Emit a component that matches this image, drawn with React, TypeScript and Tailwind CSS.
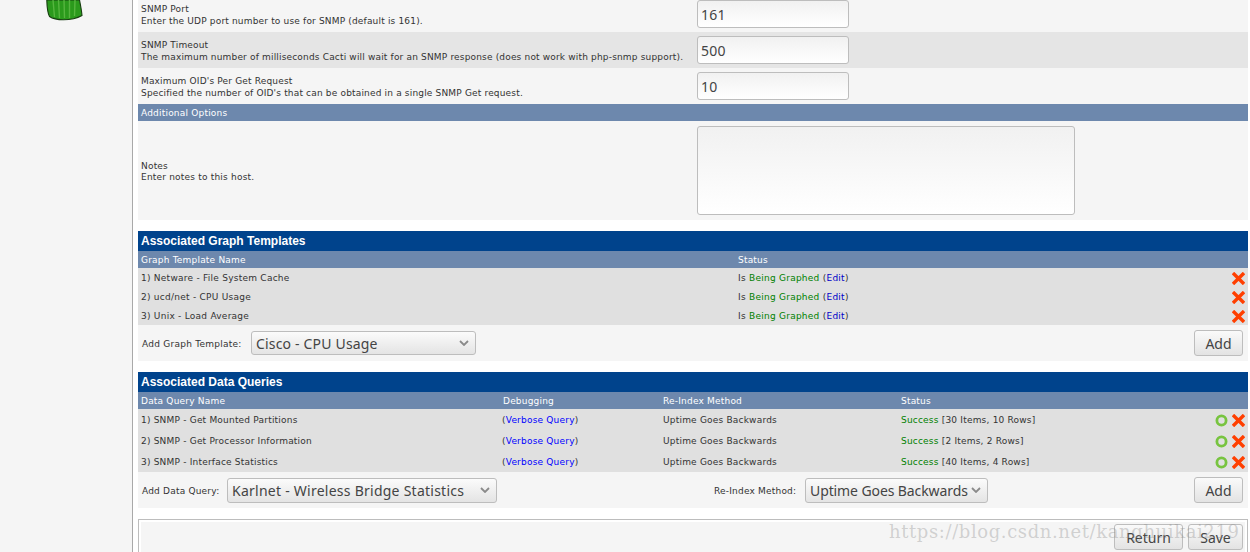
const ui = "font-['DejaVu_Sans',sans-serif]";
const ctl = "font-['Noto_Sans',sans-serif]";

function RedX() {
  return (
    <svg width="13" height="13" viewBox="0 0 13 13" className="shrink-0">
      <path d="M2.2 2.2 L10.8 10.8 M10.8 2.2 L2.2 10.8" stroke="#ff3f00" strokeWidth="3.4" strokeLinecap="square" />
    </svg>
  );
}

function GreenRing() {
  return (
    <svg width="13" height="13" viewBox="0 0 13 13" className="shrink-0">
      <circle cx="6.5" cy="6.5" r="4.6" fill="none" stroke="#78c440" strokeWidth="2.8" />
    </svg>
  );
}

function Chevron() {
  return (
    <svg width="10" height="6" viewBox="0 0 10 6" className="shrink-0">
      <path d="M1 1 L5 5 L9 1" fill="none" stroke="#8a8a8a" strokeWidth="1.8" />
    </svg>
  );
}

function FakeSelect({ value, className }: { value: string; className: string }) {
  return (
    <div
      className={`flex items-center justify-between pl-[4px] pr-[6px] border border-[#bdbdbd] rounded-[3px] bg-gradient-to-b from-[#fbfbfb] to-[#e4e4e4] text-[14px] whitespace-nowrap text-[#444] shrink-0 ${ctl} ${className}`}
    >
      <span>{value}</span>
      <Chevron />
    </div>
  );
}

function Btn({ label, className }: { label: string; className: string }) {
  return (
    <button className={`h-[26px] border border-[#bdbdbd] rounded-[3px] bg-gradient-to-b from-[#fafafa] to-[#e3e3e3] text-[14px] tracking-normal text-[#444] shrink-0 ${ctl} ${className}`}>
      {label}
    </button>
  );
}

function FieldRow({ title, desc, value, className }: { title: string; desc: string; value: string; className: string }) {
  return (
    <div className={`flex items-center pl-[3px] ${className}`}>
      <div className="w-[556px] shrink-0 pt-[2px] text-[9px] leading-[12px] tracking-[0.17px] text-[#333]">
        <div>{title}</div>
        <div className="whitespace-nowrap">{desc}</div>
      </div>
      <input
        defaultValue={value}
        className={`w-[152px] h-[28px] px-[3px] border border-[#bdbdbd] rounded-[3px] bg-gradient-to-b from-[#f1f1f1] to-[#ffffff] text-[14px] tracking-[0.3px] text-[#444] ${ctl}`}
      />
    </div>
  );
}

function Title({ text }: { text: string }) {
  return (
    <div className="h-[20px] flex items-center pl-[3px] bg-[#00438c] text-white text-[12px] font-bold font-['Liberation_Sans',sans-serif]">
      {text}
    </div>
  );
}

const graphRows = ["1) Netware - File System Cache", "2) ucd/net - CPU Usage", "3) Unix - Load Average"];
const queryRows = [
  ["1) SNMP - Get Mounted Partitions", "[30 Items, 10 Rows]"],
  ["2) SNMP - Get Processor Information", "[2 Items, 2 Rows]"],
  ["3) SNMP - Interface Statistics", "[40 Items, 4 Rows]"],
];

export default function App() {
  return (
    <div className={`relative flex h-[552px] w-[1250px] overflow-hidden bg-white ${ui}`}>
      <div className="w-[133px] shrink-0 bg-[#f5f5f5] border-r border-[#a9a9a9] pl-[46px]">
        <svg width="37" height="21" viewBox="0 0 37 21" className="block">
          <path d="M0.8 0 C1 7 1.5 13 3.5 16.5 C9 20.5 25 21.5 36 15.5 C35.5 10 34.5 5 33.5 0 Z" fill="#2b9a1c" stroke="#173d10" strokeWidth="1.1" />
          <path d="M7 0 L8.5 17 M12.5 0 L13.5 18 M18 0 L18.5 18 M23.5 0 L23.5 18 M29 0 L28.5 16" stroke="#56b53f" strokeWidth="1.4" />
        </svg>
      </div>
      <div className="w-[1110px] ml-[5px] shrink-0">
        <FieldRow
          title="SNMP Port"
          desc="Enter the UDP port number to use for SNMP (default is 161)."
          value="161"
          className="h-[32px] pb-[4px] bg-[#f5f5f5]"
        />
        <FieldRow
          title="SNMP Timeout"
          desc="The maximum number of milliseconds Cacti will wait for an SNMP response (does not work with php-snmp support)."
          value="500"
          className="h-[36px] bg-[#e5e5e5]"
        />
        <FieldRow
          title="Maximum OID's Per Get Request"
          desc="Specified the number of OID's that can be obtained in a single SNMP Get request."
          value="10"
          className="h-[36px] bg-[#f5f5f5]"
        />
        <div className="h-[17px] flex items-center pl-[3px] pt-[2px] bg-[#6d88ad] text-white text-[9px] tracking-[0.2px]">Additional Options</div>
        <div className="h-[99px] flex items-center pl-[3px] bg-[#f5f5f5]">
          <div className="w-[556px] shrink-0 pt-[2px] text-[9px] leading-[11px] tracking-[0.2px] text-[#333]">
            <div>Notes</div>
            <div>Enter notes to this host.</div>
          </div>
          <textarea className="w-[378px] h-[89px] border border-[#bdbdbd] rounded-[3px] bg-gradient-to-b from-[#f1f1f1] to-[#ffffff] resize-none" />
        </div>

        <div className="mt-[11px]">
          <Title text="Associated Graph Templates" />
          <div className="h-[17px] flex items-center pl-[3px] pt-[2px] bg-[#6d88ad] text-white text-[9px] tracking-[0.2px]">
            <div className="w-[597px]">Graph Template Name</div>
            <div>Status</div>
          </div>
          {graphRows.map((name) => (
            <div key={name} className="h-[19px] flex items-center pl-[3px] pr-[3px] bg-[#e0e0e0] text-[9px] tracking-[0.25px] text-[#333]">
              <div className="w-[597px] shrink-0 pt-[2px]">{name}</div>
              <div className="flex-1 pt-[2px]">
                <span>Is </span>
                <span className="text-[#008000]">Being Graphed</span>
                <span> (</span>
                <span className="text-[#0000c8]">Edit</span>
                <span>)</span>
              </div>
              <div className="mt-[1px]">
                <RedX />
              </div>
            </div>
          ))}
          <div className="h-[36px] flex items-center pl-[4px] pr-[5px] bg-[#f5f5f5] text-[9px] tracking-[0.25px] text-[#333]">
            <div className="w-[109px] shrink-0 mt-[4px]">Add Graph Template:</div>
            <FakeSelect value="Cisco - CPU Usage" className="w-[225px] h-[24px] tracking-[0.18px]" />
            <div className="flex-1" />
            <Btn label="Add" className="w-[49px]" />
          </div>
        </div>

        <div className="mt-[11px]">
          <Title text="Associated Data Queries" />
          <div className="h-[17px] flex items-center pl-[3px] pt-[2px] bg-[#6d88ad] text-white text-[9px] tracking-[0.2px]">
            <div className="w-[362px]">Data Query Name</div>
            <div className="w-[160px]">Debugging</div>
            <div className="w-[238px]">Re-Index Method</div>
            <div>Status</div>
          </div>
          {queryRows.map(([name, count]) => (
            <div key={name} className="h-[21px] flex items-center pl-[3px] pr-[3px] bg-[#e0e0e0] text-[9px] tracking-[0.2px] text-[#333]">
              <div className="w-[361px] shrink-0 pt-[2px]">{name}</div>
              <div className="w-[161px] shrink-0 pt-[2px]">
                (<span className="text-[#0000ff]">Verbose Query</span>)
              </div>
              <div className="w-[238px] shrink-0 pt-[2px]">Uptime Goes Backwards</div>
              <div className="flex-1 pt-[2px]">
                <span className="text-[#008000]">Success</span> {count}
              </div>
              <div className="flex items-center gap-[4px] mt-[2px]">
                <GreenRing />
                <RedX />
              </div>
            </div>
          ))}
          <div className="h-[36px] flex items-center pl-[4px] pr-[5px] bg-[#f5f5f5] text-[9px] tracking-[0.2px] text-[#333]">
            <div className="w-[85px] shrink-0 mt-[4px]">Add Data Query:</div>
            <FakeSelect value="Karlnet - Wireless Bridge Statistics" className="w-[270px] h-[25px] tracking-[0.25px]" />
            <div className="w-[217px] shrink-0" />
            <div className="w-[91px] shrink-0 mt-[4px]">Re-Index Method:</div>
            <FakeSelect value="Uptime Goes Backwards" className="w-[183px] h-[25px] tracking-[-0.1px]" />
            <div className="flex-1" />
            <Btn label="Add" className="w-[49px]" />
          </div>
        </div>

        <div className="mt-[11px] h-[40px] border border-[#bdbdbd] p-[2px] bg-white">
          <div className="h-full bg-[#f5f5f5] flex justify-end gap-[5px] pt-[2px] pr-[2px]">
            <Btn label="Return" className="w-[69px]" />
            <Btn label="Save" className="w-[55px]" />
          </div>
        </div>
      </div>
      <div className="absolute left-[889px] top-[518px] whitespace-nowrap text-[18px] tracking-[0.6px] text-[#8a8a8a]/35 font-['DejaVu_Serif',serif] pointer-events-none">
        https://blog.csdn.net/kanghuikai219
      </div>
    </div>
  );
}
